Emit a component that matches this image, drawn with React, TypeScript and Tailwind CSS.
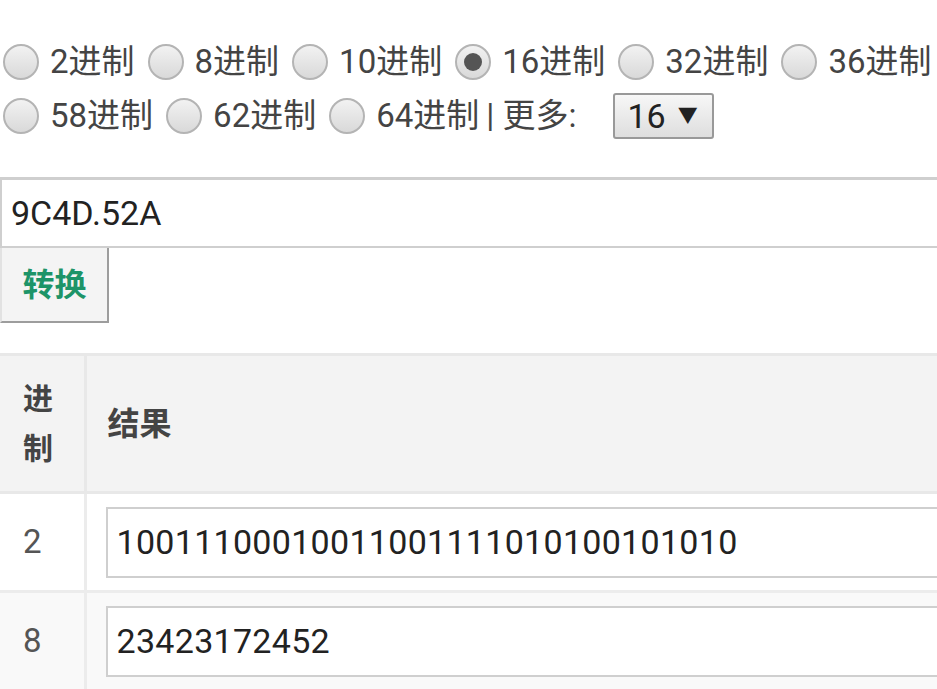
import { useState } from 'react'

const firstRow = [2, 8, 10, 16, 32, 36]
const secondRow = [58, 62, 64]

const results = [
  { base: 2, value: '10011100010011001111010100101010', stripe: false },
  { base: 8, value: '23423172452', stripe: true },
]

function Radio({ checked, onClick }: { checked: boolean; onClick: () => void }) {
  return (
    <span
      onClick={onClick}
      className="ml-[3px] mr-[11px] flex h-[36px] w-[36px] shrink-0 items-center justify-center rounded-full border-2 border-[#b4b4b4] bg-gradient-to-b from-[#f2f2f2] to-[#d9d9d9]"
    >
      {checked ? <span className="h-[18px] w-[18px] rounded-full bg-[#555]" /> : null}
    </span>
  )
}

function BaseOption({ base, selected, onSelect }: { base: number; selected: number; onSelect: (b: number) => void }) {
  return (
    <label className="mr-[10px] flex items-center whitespace-nowrap" onClick={() => onSelect(base)}>
      <Radio checked={selected === base} onClick={() => onSelect(base)} />
      <span>{base}进制</span>
    </label>
  )
}

export default function App() {
  const [selected, setSelected] = useState(16)
  const [input, setInput] = useState('9C4D.52A')

  return (
    <div className="h-[689px] w-[937px] overflow-hidden bg-white" style={{ fontFamily: 'Roboto, "Noto Sans CJK SC", sans-serif' }}>
      <div className="w-[980px] pt-[35px] text-[33px] text-[#444]">
        <div className="flex h-[54px] items-center">
          {firstRow.map((b) => (
            <BaseOption key={b} base={b} selected={selected} onSelect={setSelected} />
          ))}
        </div>
        <div className="flex h-[54px] items-center">
          {secondRow.map((b) => (
            <BaseOption key={b} base={b} selected={selected} onSelect={setSelected} />
          ))}
          <span className="-ml-[3px] whitespace-nowrap">| 更多:</span>
          <div className="ml-[36px] flex h-[46px] w-[101px] items-center rounded-[3px] border-2 border-[#999] bg-gradient-to-b from-[#f7f7f7] to-[#dedede] pl-[13px] text-[34px] text-[#222]">
            <span>16</span>
            <span className="ml-[12px] text-[20px]">▼</span>
          </div>
        </div>

        <div className="mt-[34px]">
          <input
            value={input}
            onChange={(e) => setInput(e.target.value)}
            className="block h-[71px] w-[980px] border-2 border-t-[3px] border-[#cfcfcf] bg-white pl-[9px] text-[34px] text-[#222] outline-none"
          />
          <button
            type="button"
            className="block h-[75px] w-[109px] border-2 border-t-0 border-l-[#e2e2e2] border-r-[#9d9d9d] border-b-[#9d9d9d] bg-[#f4f4f4] text-[32px] font-bold text-[#1d9468]"
          >
            转换
          </button>
        </div>

        <table className="mt-[30px] w-[980px] table-fixed border-collapse">
          <colgroup>
            <col className="w-[85px]" />
            <col />
          </colgroup>
          <thead>
            <tr className="bg-[#f3f3f3]">
              <th className="h-[138px] border-[3px] border-l-0 border-[#e8e8e8] pl-[23px] text-left align-middle text-[30px] leading-[50px] font-bold text-[#444]">
                进<br />制
              </th>
              <th className="border-[3px] border-[#e8e8e8] pl-[21px] text-left align-middle text-[32px] font-bold text-[#444]">结果</th>
            </tr>
          </thead>
          <tbody>
            {results.map((r) => (
              <tr key={r.base} className={r.stripe ? 'bg-[#f9f9f9]' : 'bg-white'}>
                <td className="h-[99px] border-[3px] border-l-0 border-[#ececec] pl-[23px] align-middle text-[33px] text-[#555]">{r.base}</td>
                <td className="border-[3px] border-[#ececec] pl-[19px] align-middle">
                  <input
                    readOnly
                    value={r.value}
                    className="block h-[71px] w-[900px] border-2 border-[#cfcfcf] bg-white pl-[9px] text-[34px] tracking-[0.3px] text-[#222] outline-none"
                  />
                </td>
              </tr>
            ))}
          </tbody>
        </table>
      </div>
    </div>
  )
}
